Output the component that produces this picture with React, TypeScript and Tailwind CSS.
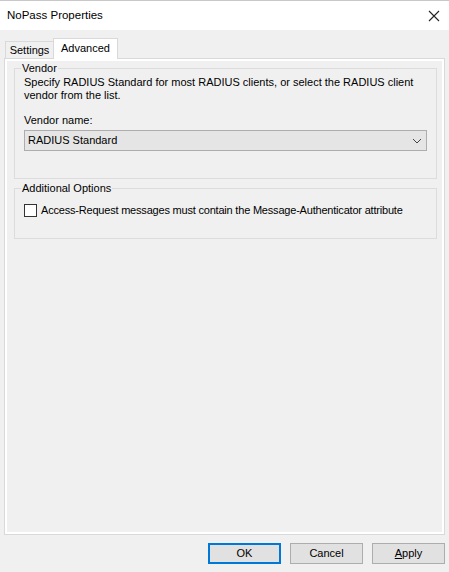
import React from "react";

function Btn({ label, primary }: { label: React.ReactNode; primary?: boolean }) {
  return (
    <button
      className={`w-[73px] h-[21px] bg-[#e1e1e1] text-[11px] text-black flex items-center justify-center ${
        primary ? "border-2 border-[#0078d7]" : "border border-[#adadad]"
      }`}
    >
      {label}
    </button>
  );
}

export default function App() {
  return (
    <div
      className="w-[449px] h-[572px] bg-[#f0f0f0] flex flex-col text-black overflow-hidden"
      style={{ fontFamily: '"Liberation Sans", Arial, sans-serif' }}
    >
      {/* title bar */}
      <div className="h-[30px] bg-white border-t border-[#c8c8c8] flex items-center justify-between pl-[7px] pr-[8px]">
        <span className="text-[11.5px]">NoPass Properties</span>
        <svg width="12" height="12" viewBox="0 0 12 12" className="mr-[1px]">
          <path d="M1 1 L11 11 M11 1 L1 11" stroke="#222" strokeWidth="1.1" fill="none" />
        </svg>
      </div>

      <div className="flex-1 flex flex-col px-[4px] pt-[7px]">
        {/* tabs */}
        <div className="flex items-end h-[21px] pl-[1px] text-[11px]">
          <div className="w-[49px] h-[17px] border border-b-0 border-[#d9d9d9] bg-[#f0f0f0] flex items-center justify-center">
            Settings
          </div>
          <div className="w-[65px] h-[21px] -ml-px border border-b-0 border-[#d9d9d9] bg-white flex items-center justify-center pb-[2px] relative z-10 -mb-px">
            Advanced
          </div>
        </div>

        {/* panel */}
        <div className="h-[477px] border border-[#d9d9d9] shadow-[inset_0_0_0_2px_#ffffff] bg-[#f0f0f0] pt-[2px] pl-[9px] pr-[7px] text-[11px]">
          <fieldset className="border border-[#dcdcdc] px-[9px] pb-[27px]">
            <legend className="-ml-[3px] px-[1px] leading-[15px]">Vendor</legend>
            <p className="leading-[13px]">
              Specify RADIUS Standard for most RADIUS clients, or select the RADIUS client
              <br />
              vendor from the list.
            </p>
            <div className="mt-[12px] leading-[13px]">Vendor name:</div>
            <div className="mt-[3px] h-[21px] bg-[#e5e5e5] border border-[#adadad] flex items-center justify-between pl-[3px] pr-[4px]">
              <span>RADIUS Standard</span>
              <svg width="10" height="6" viewBox="0 0 10 6">
                <path d="M1 1 L5 5 L9 1" stroke="#444" strokeWidth="1" fill="none" />
              </svg>
            </div>
          </fieldset>

          <fieldset className="mt-[2px] border border-[#dcdcdc] px-[9px] pb-[19px]">
            <legend className="-ml-[3px] px-[1px] leading-[15px]">Additional Options</legend>
            <label className="flex items-center gap-[4px] mt-[6px]">
              <span className="w-[13px] h-[13px] border border-[#333] bg-white shrink-0" />
              <span className="tracking-[-0.2px]">
                Access-Request messages must contain the Message-Authenticator attribute
              </span>
            </label>
          </fieldset>
        </div>

        {/* buttons */}
        <div className="flex justify-end gap-[9px] mt-[8px]">
          <Btn label="OK" primary />
          <Btn label="Cancel" />
          <Btn
            label={
              <span>
                <span className="underline">A</span>pply
              </span>
            }
          />
        </div>
      </div>
    </div>
  );
}
